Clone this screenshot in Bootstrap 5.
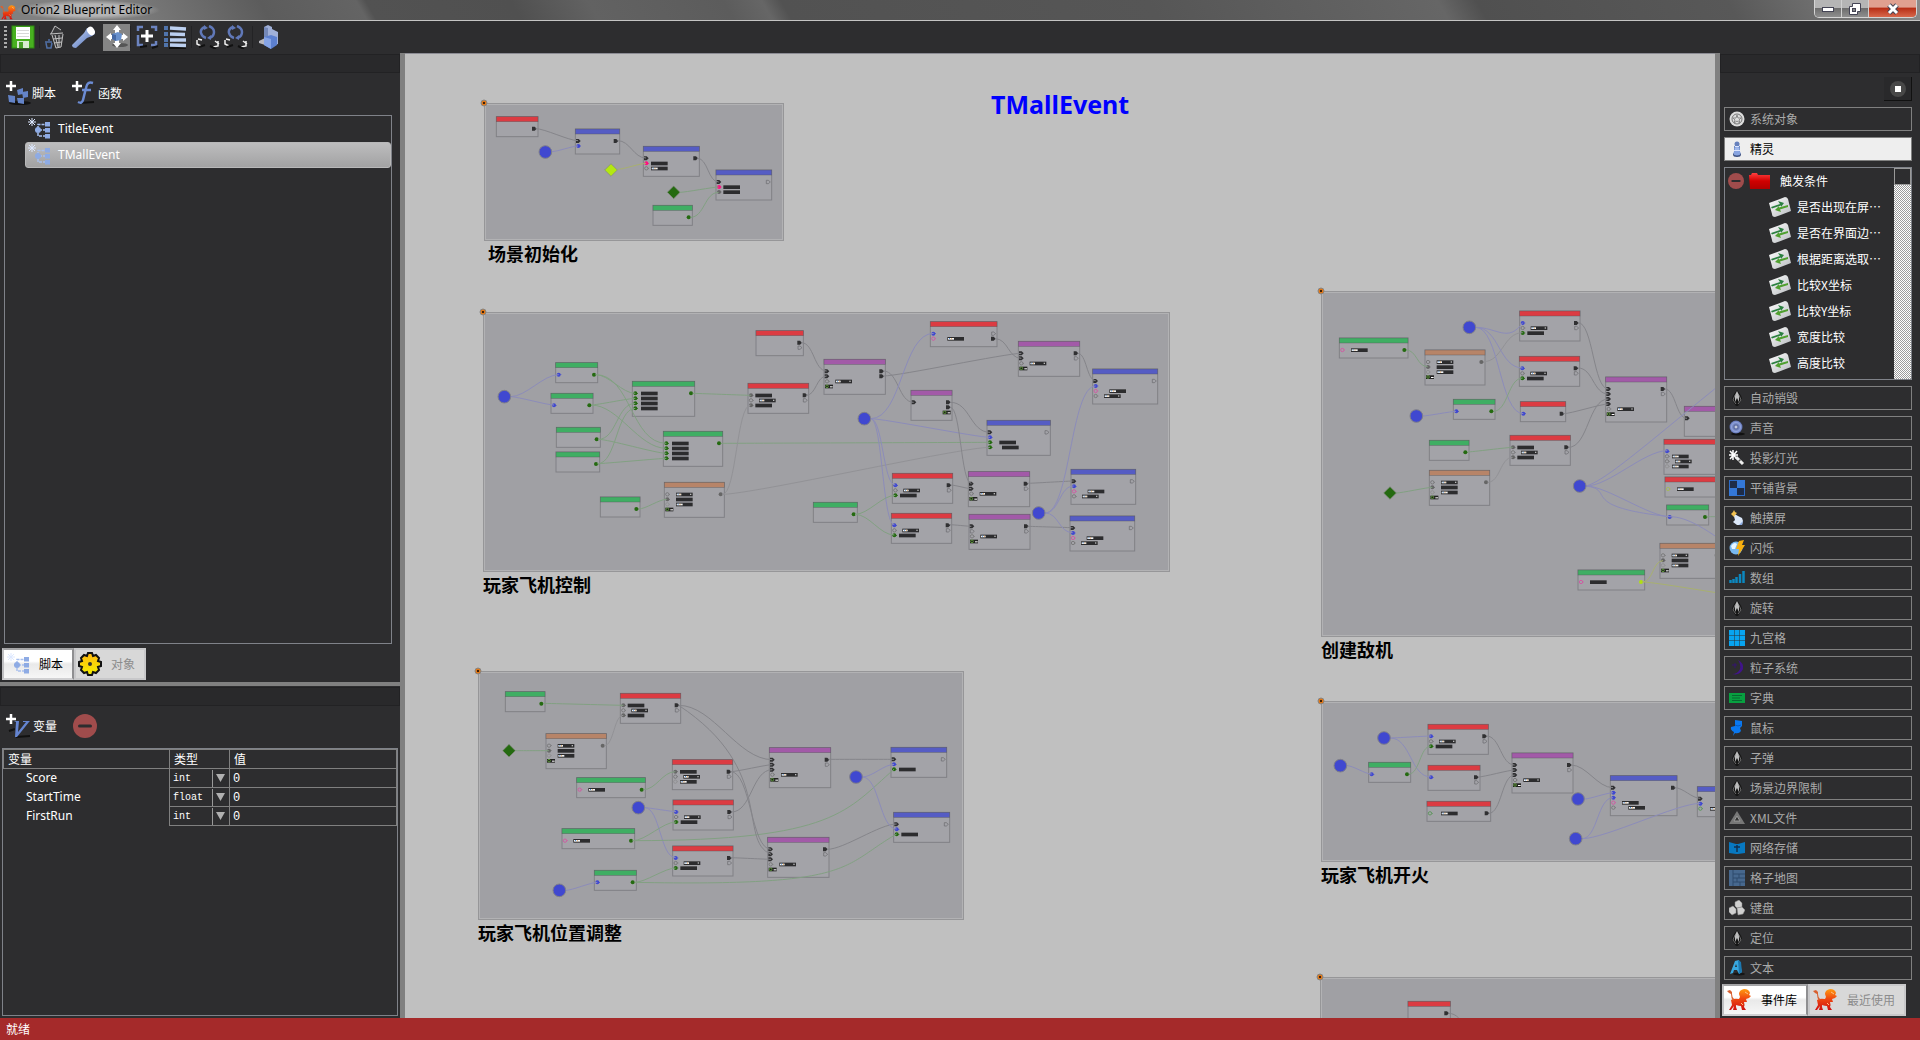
<!DOCTYPE html>
<html lang="zh-CN">
<head>
<meta charset="utf-8">
<meta name="viewport" content="width=device-width, initial-scale=1">
<title>Orion2 Blueprint Editor</title>
<link href="https://cdn.jsdelivr.net/npm/bootstrap@5.3.0/dist/css/bootstrap.min.css" rel="stylesheet">
<style>
  :root { --ui: #2d2d2f; --line: #808080; --edge: #7f8289; }
  body { font: 12px/16px "Noto Sans", "Noto Sans CJK SC", sans-serif; background: var(--ui); color: #fff; }
  button { font: inherit; color: inherit; background: none; border: 0; padding: 0; }
  svg { display: block; flex: none; }
  .cjk { font-family: "Noto Sans CJK SC", sans-serif; }

  .titlebar { height: 21px; border-bottom: 1px solid #c4c4c4; color: #000;
    background: linear-gradient(60deg, #808080 0 6%, #5c5c5c 14%, #646464 19%, #525252 19.5%, #505050 27%, #626262 31%, #5c5c5c 38%, #666 40%, #525252 41%, #565656 60%, #666 75%, #505050 77%, #585858 90%, #8a8a8a); }
  .titletext { padding: 0 8px 0 5px; background: radial-gradient(closest-side, #b4b4b4 60%, transparent); line-height: 20px; }
  .winbtns { height: 18px; border: 1px solid #d5d5d5; border-top: 0; border-radius: 0 0 5px 5px; overflow: hidden; margin-right: 3px; }
  .winbtns button { width: 27px; border-right: 1px solid #d0d0d0; background: linear-gradient(#b5b5b5 0 45%, #6e6e6e 50%, #8e8e8e); display: grid; place-items: center; }
  .winbtns .closer { width: 47px; border: 0; background: linear-gradient(#e0a090 0 40%, #b83018 50%, #d8684c); }

  .tools { height: 32px; padding: 0 0 0 4px; }
  .grip { width: 3px; height: 22px; background: repeating-linear-gradient(#aaa 0 2px, transparent 2px 4px); }
  .tools .on { width: 27px; height: 27px; margin: 0 -4px 0 3px; background: #858585; display: grid; place-items: center; }
  .tsep { width: 1px; height: 22px; background: #232325; }

  .left { width: 400px; }
  .right { width: 200px; }
  .split { width: 5px; background: var(--line); }
  .hsplit { height: 4px; background: var(--line); }
  .dock { height: 19px; margin-top: 1px; border: 1px solid #222224; background: #29292b; }
  .vars { flex: 0 0 332px; }
  .panebar { height: 42px; padding: 0 6px 3px; }
  .scripts { margin: 0 8px 4px 4px; border: 1px solid var(--edge); list-style: none; padding: 0; }
  .scripts a { display: flex; align-items: center; gap: 8px; height: 26px; color: #fff; text-decoration: none; margin-left: 20px; padding-left: 3px; border-radius: 3px; }
  .scripts a.sel { background: linear-gradient(#bdbdbe, #a2a2a3); border: 1px solid #b8b8b9; padding-left: 2px; }

  .tabset { height: 32px; margin-bottom: 2px; padding-left: 2px; }
  .tabset button { height: 32px; border: 2px solid #c8c8ca; background: #d8d8d8; color: #8c8c8c; display: flex; align-items: center; padding: 0 9px 0 2px; gap: 9px; }
  .tabset button.sel { background: linear-gradient(#fff 40%, #e9e9e9 50%, #f6f6f6); color: #000; border-color: #a5a5a7 #8f8f91 #d0d0d2 #c0c0c2; }

  .vbox { margin: 0 2px 2px; border: 1px solid var(--edge); }
  .vtable { width: 100%; table-layout: fixed; border-collapse: collapse; }
  .vtable th, .vtable td { height: 19px; padding: 0; border: 1px solid var(--line); line-height: 16px; font-weight: 400; }
  .vtable thead th { padding-left: 4px; font-family: "Noto Sans CJK SC", sans-serif; }
  .vtable tbody th { border-color: transparent; border-right-color: var(--line); padding-left: 22px; }
  .vtable select, .vtable input { display: block; width: 100%; height: 17px; border: 0; padding: 1px 3px 0; color: #fff; background: transparent; font: 10px/16px "Liberation Mono", monospace; border-radius: 0; }
  .vtable input { font-size: 12px; }
  .vtable select { appearance: none; background: url("data:image/svg+xml,%3Csvg xmlns='http://www.w3.org/2000/svg' width='17' height='17'%3E%3Cpath d='M0.5 0V17' stroke='%23999'/%3E%3Cpath d='M4 4H13L8.5 12Z' fill='%23b0b0b0'/%3E%3C/svg%3E") right center no-repeat; }
  .c-type { width: 60px; }
  .c-val { width: 167px; }

  .statusbar { height: 22px; background: #a52a2a; padding-left: 6px; line-height: 22px; }

  .board { background: #c0c0c0; border-top: 1px solid #8c8c94; min-width: 0; }
  .board h1 { position: absolute; left: 586px; top: 33px; font: 700 25px/34px "Noto Sans", sans-serif; color: #00f; margin: 0; }
  .group { position: absolute; margin: 0; color: #000; }
  .group > svg { overflow: visible; }
  .group figcaption { font: 700 18px/24px "Noto Sans CJK SC", sans-serif; white-space: nowrap; }
  .g1 figcaption { padding-left: 4px; }
  .g1 { left: 79px; top: 49px; }
  .g2 { left: 78px; top: 258px; }
  .g3 { left: 73px; top: 617px; }
  .g4 { left: 916px; top: 237px; }
  .g5 { left: 916px; top: 647px; }
  .g6 { left: 915px; top: 923px; }

  .libs { padding: 0 8px 0 4px; gap: 6px; }
  .lib { height: 24px; border: 1px solid var(--line); color: #aaa; display: flex; align-items: center; gap: 5px; padding-left: 4px; text-align: left; }
  .lib.sel { background: #eee; color: #000; }
  .lib svg { width: 16px; height: 16px; }
  .stopbtn { width: 28px; height: 24px; margin: 4px 8px 6px auto; background: #29292b; border-right: 1px solid #111; border-bottom: 1px solid #111; display: grid; place-items: center; }
  .tree { height: 213px; border: 1px solid var(--edge); overflow: hidden; }
  .tree ul { list-style: none; margin: 0; padding: 0; }
  .tree li > div { height: 26px; display: flex; align-items: center; }
  .branch { gap: 5px; padding-left: 3px; }
  .leaf { gap: 6px; padding-left: 44px; }
  .sbar { width: 17px; background: repeating-conic-gradient(#fff 0 25%, #9c9c9c 0 50%) 0 0 / 2px 2px; }
  .thumb { height: 17px; background: var(--ui); border: 1px solid #999; }
</style>
<script src="https://cdn.jsdelivr.net/npm/bootstrap@5.3.0/dist/js/bootstrap.bundle.min.js"></script>
</head>
<body class="vh-100 d-flex flex-column overflow-hidden m-0">

<svg width="0" height="0" class="position-absolute" aria-hidden="true">
  <defs>
    <linearGradient id="blu" x1="0" y1="0" x2="1" y2="1"><stop offset="0" stop-color="#c4d4f4"/><stop offset="1" stop-color="#5070b8"/></linearGradient>
    <linearGradient id="fire" x1="0" y1="0" x2="0" y2="1"><stop offset="0" stop-color="#ff9a10"/><stop offset=".45" stop-color="#f04a10"/><stop offset="1" stop-color="#d01010"/></linearGradient>
    <linearGradient id="redf" x1="0" y1="0" x2="0" y2="1"><stop offset="0" stop-color="#ff4040"/><stop offset=".5" stop-color="#d00000"/><stop offset="1" stop-color="#b00000"/></linearGradient>
    <linearGradient id="cardg" x1="0" y1="0" x2="1" y2="1"><stop offset="0" stop-color="#fff"/><stop offset="1" stop-color="#b8bcc0"/></linearGradient>
    <linearGradient id="gearg" x1="0" y1="0" x2="0" y2="1"><stop offset="0" stop-color="#ffb810"/><stop offset="1" stop-color="#f4f000"/></linearGradient>
    <radialGradient id="spk"><stop offset="0" stop-color="#fff"/><stop offset=".3" stop-color="#5a6aa0"/><stop offset=".7" stop-color="#8fa2dc"/><stop offset="1" stop-color="#5a6cae"/></radialGradient>
  </defs>
  <symbol id="lion" viewBox="0 0 24 22"><g fill="url(#fire)"><path d="M12 5Q12 1 17 0Q22 0 23 4L22 6L24 7L22 9L19 10L20 13L17 13Q18 16 17 18L19 21H15L14 17Q12 17 9 16L9 18L10 21H6L7 17L4 21H2L5 16L4 11Q7 9 12 10L13 8Z"/></g><path d="M6 12Q4 9 4 5L2 4L0 2L3 1L5 3V5Q5 8 7 10" fill="#d86030"/><path d="M18 3l3 2M14 14l2 2" stroke="#ffc080" stroke-width="1"/></symbol>
  <symbol id="tree" viewBox="0 0 22 22"><path d="M10 11V6.500H17M10 11V18H17M7 12H17" fill="none" stroke="#a8c0ee" stroke-width="1.500" stroke-dasharray="3 1"/><g fill="#8eabe4"><circle cx="10" cy="12" r="3"/><rect x="17" y="4" width="5" height="4.500"/><rect x="17" y="10" width="5" height="4.500"/><rect x="17" y="16" width="5" height="4.500"/></g><path d="M4 0V8M0 4H8M1 1L7 7M7 1L1 7" stroke="#dde8ff" stroke-width="1"/></symbol>
  <symbol id="focus" viewBox="0 0 24 24"><path d="M9 2Q4 4 5 8Q6 12 10 13M13 1Q18 3 18 7Q18 11 14 13" fill="none" stroke="#6078b8" stroke-width="2.500"/><path d="M8 0L12 3L8 5ZM15 10L11 13L15 15Z" fill="#6078b8"/><path d="M1 15V19L5 21M6 15L2 14M19 16L23 19M22 16V21L17 22" fill="none" stroke="#f0f0f0" stroke-width="1.500"/><path d="M3 22L9 20M14 21L20 24" stroke="#111" stroke-width="2"/></symbol>
  <symbol id="minus" viewBox="0 0 24 24"><circle cx="12" cy="12" r="12" fill="#a04c4c"/><rect x="5" y="10.500" width="14" height="3" rx="1.500" fill="#2d2d2f"/></symbol>
  <symbol id="swap" viewBox="0 0 22 20"><path d="M0 6L16 0Q18 0 19 2L22 14L6 20Q3 20 3 17Z" fill="url(#cardg)"/><path d="M2 10L11 7L9 4L15 6L12 10V8.500L3 11.500Z" fill="#2a8040"/><path d="M19 8L10 10.500V9L6 13L12 15L11 12.500L19 10Z" fill="#50a030"/></symbol>
  <symbol id="i-wheel" viewBox="0 0 16 16"><circle cx="8" cy="8" r="7.500" fill="#ddd"/><circle cx="8" cy="8" r="5" fill="none" stroke="#777"/><path d="M8 4L9 7L12 7L10 9L11 12L8 10L5 12L6 9L4 7H7Z" fill="none" stroke="#888"/></symbol>
  <symbol id="i-pawn" viewBox="0 0 16 16"><rect x="5" y="5" width="6" height="9" fill="#6f8cc8"/><ellipse cx="8" cy="13.500" rx="4" ry="2.500" fill="#3c5080"/><ellipse cx="8" cy="12" rx="3.500" ry="2.500" fill="#88a4e0"/><ellipse cx="8" cy="8" rx="2.500" ry="2" fill="#a0b8ec"/><circle cx="8" cy="3" r="2.500" fill="#6680bc"/><path d="M6 5.500H10M5 9.500H11" stroke="#dde6ff"/></symbol>
  <symbol id="i-drop" viewBox="0 0 16 16"><path d="M8 0Q13 6 13 9L9 16H7L3 10Q3 6 8 0Z" fill="#151515"/><path d="M8 1L10 5V12L8 8L6 12V5Z" fill="#bbb"/><path d="M6 5L4 10L7 14M10 5L12 10L9 14" stroke="#707070" fill="none"/></symbol>
  <symbol id="i-sound" viewBox="0 0 16 16"><ellipse cx="9" cy="14" rx="7" ry="1.500" fill="#111"/><circle cx="7" cy="7" r="6.500" fill="url(#spk)"/></symbol>
  <symbol id="i-wand" viewBox="0 0 16 16"><path d="M4 0V10M0 5H9M1 1L8 9M8 1L1 9" stroke="#fff" stroke-width="1.500"/><path d="M7 7L14 14" stroke="#eee" stroke-width="3"/><path d="M10 10L11 11" stroke="#555" stroke-width="3"/></symbol>
  <symbol id="i-tile" viewBox="0 0 16 16"><rect x=".5" y=".5" width="15" height="15" fill="#1e2c48" stroke="#2c6cc8"/><path d="M8 0H16V8H8ZM0 8H8V16H0Z" fill="#3478d8"/></symbol>
  <symbol id="i-touch" viewBox="0 0 16 16"><path d="M4 3L9 6L13 8L14 11L13 15L8 15L4 12L6 10Z" fill="#dce8fa"/><path d="M10 15L14 11L13 15Z" fill="#88a8e0"/><path d="M5 0L6 2L8 3L6 5L5 7L3 5L2 4L4 2Z" fill="#f0c050"/></symbol>
  <symbol id="i-flash" viewBox="0 0 16 16"><circle cx="7" cy="8" r="6.500" fill="#78b8f0"/><path d="M2 6Q5 1 8 4L6 9L3 9Z" fill="#e8f6ff"/><path d="M10 1L15 0L13 5H16L9 16L10 9H7Z" fill="#f8b010"/></symbol>
  <symbol id="i-bars" viewBox="0 0 16 16"><path d="M1.500 10V13M4.500 9V13M7.500 7V13M11 4V13M14.500 1V13" stroke="#0c88c0" stroke-width="2.500"/></symbol>
  <symbol id="i-nine" viewBox="0 0 16 16"><path d="M0 0H5V5H0ZM5.500 0H10.500V5H5.500ZM11 0H16V5H11ZM0 5.500H5V10.500H0ZM5.500 5.500H10.500V10.500H5.500ZM11 5.500H16V10.500H11ZM0 11H5V16H0ZM5.500 11H10.500V16H5.500ZM11 11H16V16H11Z" fill="#08a4f0"/></symbol>
  <symbol id="i-moon" viewBox="0 0 16 16"><path d="M9 0Q15 3 14 9Q11 16 3 14Q9 14 11 9Q12 4 9 0Z" fill="#40148a"/><path d="M6 3V8M3 5H8" stroke="#341470"/></symbol>
  <symbol id="i-dict" viewBox="0 0 16 16"><rect y="3" width="16" height="10" fill="#08a040"/><path d="M3 5.500H13M3 8H11M3 10.500H13" stroke="#066830"/></symbol>
  <symbol id="i-pin" viewBox="0 0 16 16"><path d="M6 0L13 1V6L11 8L12 11Q10 14 6 13L4 16L5 12Q1 10 2 7L6 6Z" fill="#0a78f0"/><path d="M6 5Q9 7 12 5" stroke="#085ac0" fill="none"/></symbol>
  <symbol id="i-tri" viewBox="0 0 16 16"><path d="M8 1L16 14H0Z" fill="#777"/><path d="M8 6L11 11H5Z" fill="#333" stroke="#999"/></symbol>
  <symbol id="i-net" viewBox="0 0 16 16"><path d="M0 2L7 4V14L0 13ZM16 2L9 4V14L16 13Z" fill="#0878c0"/><path d="M7 4H9V14H7Z" fill="#0878c0"/><path d="M8 5V12M5 7H11" stroke="#103050" stroke-width="1.500"/></symbol>
  <symbol id="i-grid" viewBox="0 0 16 16"><rect width="16" height="16" fill="#47688e"/><path d="M4 0V16M4 4H16M4 8H16M4 12H16M10 4V8M8 8V12M11 12V16" stroke="#2f4a6c" fill="none"/></symbol>
  <symbol id="i-keys" viewBox="0 0 16 16"><g fill="#d0d0d0" stroke="#888" stroke-width=".5"><path d="M6 2L10 0L13 3V7L8 8L6 6Z"/><path d="M0 8L4 6L7 9V13L3 15L0 12Z"/><path d="M8 8L13 7L16 10L14 14L9 15Z"/></g></symbol>
  <symbol id="i-text" viewBox="0 0 16 16"><ellipse cx="10" cy="14" rx="6" ry="1.500" fill="#151515"/><path d="M1 14L6 1L10 0L13 12L10 14L8 10H5L4 13ZM6 7H8L7 4Z" fill="#38a8e0" fill-rule="evenodd"/><path d="M9 0L12 2L13 12L10 14Z" fill="#1c78b0"/></symbol>
</svg>

<header class="titlebar d-flex align-items-start">
  <svg width="16" height="17" class="mt-1"><use href="#lion"/></svg>
  <span class="titletext">Orion2 Blueprint Editor</span>
  <div class="winbtns d-flex ms-auto">
    <button type="button" aria-label="最小化"><svg width="12" height="6"><rect x=".5" y="1.500" width="11" height="4" fill="#fff" stroke="#445"/></svg></button>
    <button type="button" aria-label="还原"><svg width="12" height="12"><path d="M3.500.5H11.500V8.500H8.500V11.500H.5V3.500H3.500Z" fill="#fff" stroke="#445"/><rect x="3.500" y="5.500" width="3" height="3" fill="#888" stroke="#445"/></svg></button>
    <button type="button" class="closer" aria-label="关闭"><svg width="12" height="12"><path d="M2 2L10 10M10 2L2 10" stroke="#445" stroke-width="5"/><path d="M2 2L10 10M10 2L2 10" stroke="#fff" stroke-width="3"/></svg></button>
  </div>
</header>

<nav class="tools d-flex align-items-center gap-1" aria-label="工具栏">
  <span class="grip"></span>
  <button type="button" aria-label="保存"><svg width="24" height="24"><rect x="1" y="1" width="22" height="22" fill="#48b020" stroke="#2c8810"/><rect x="5" y="2" width="14" height="12" fill="#fff"/><path d="M6 5.500H18M6 8.500H18M6 11.500H18" stroke="#d8d8d8"/><rect x="6" y="16" width="12" height="7" fill="#d8ecd0"/><rect x="8" y="17" width="4" height="6" fill="#48a028"/></svg></button>
  <span class="tsep"></span>
  <button type="button" aria-label="删除"><svg width="24" height="24"><path d="M6 9L10 1L17 5L19 8L18 22L11 24L8 11Z" fill="#3a3a3c"/><path d="M7 9L11 1L17 5M6 9L19 8M8 10L12 23L17 22L19 9M11 10L14 22M15 10L15 22M9 14L18 13M10 18L18 17" fill="none" stroke="#c0c0c0"/><path d="M1 17H8M2 18L3 23H7L8 18M4 15H6" fill="none" stroke="#5070a8" stroke-width="1.500"/></svg></button>
  <button type="button" aria-label="查找"><svg width="24" height="24"><path d="M0 20L12 8L15 3L20 3L23 9L20 11L15 13L4 23Q0 23 0 20Z" fill="url(#blu)"/><ellipse cx="19" cy="6" rx="3.500" ry="4.500" fill="#fff" transform="rotate(-35 19 6)"/></svg></button>
  <button type="button" class="on" aria-label="移动" aria-pressed="true"><svg width="24" height="24"><ellipse cx="15" cy="20" rx="8" ry="2" fill="#555"/><path d="M12 0L16 5H14V8H10V5H8ZM12 23L8 18H10V15H14V18H16ZM1 12L6 8V10H9V14H6V16ZM23 12L18 8V10H15V14H18V16Z" fill="#fff"/><path d="M7 9L13 7L17 9L16 15L11 16L7 14Z" fill="#6890cc"/><path d="M7 9L11 10V16L7 14Z" fill="#4468a4"/></svg></button>
  <span class="tsep"></span>
  <button type="button" aria-label="添加框"><svg width="24" height="24"><path d="M3 6V2H8M16 2H21V6M21 16V20H16M8 20H3V10" fill="none" stroke="#6c84c0" stroke-width="2.500"/><path d="M5 22L12 21M17 23L23 21" stroke="#111" stroke-width="2"/><path d="M12 5V17M6 11H18" stroke="#fff" stroke-width="3"/></svg></button>
  <button type="button" aria-label="列表"><svg width="24" height="24"><path d="M6 23H23" stroke="#111" stroke-width="2"/><path d="M1 3H5M1 9H5M1 15H5M1 20H5" stroke="#5074ac" stroke-width="4"/><path d="M7 3L23 4M7 9L22 9.500M7 15L23 15M7 20L23 20.500" stroke="#bcd0f0" stroke-width="3.500"/></svg></button>
  <span class="tsep"></span>
  <button type="button" aria-label="定位上一个"><svg width="24" height="24"><use href="#focus"/></svg></button>
  <button type="button" aria-label="定位下一个"><svg width="24" height="24"><use href="#focus"/></svg></button>
  <span class="tsep"></span>
  <button type="button" aria-label="构建"><svg width="24" height="24"><path d="M7 2L11 0L15 2V4L21 7V19L15 21L7 15Z" fill="#a0b0d8"/><path d="M7 2L11 3V16L7 14Z" fill="#7488b8"/><path d="M2 16L8 13V20L2 18Z" fill="#b8b8c0"/><path d="M7 12L14 10L20 12V20L14 24L7 20Z" fill="#5c80d0"/><path d="M7 12L14 14V24L7 20Z" fill="#86a4e6"/></svg></button>
</nav>

<main class="d-flex flex-grow-1 overflow-hidden">
  <aside class="left d-flex flex-column flex-shrink-0">
    <section class="d-flex flex-column flex-grow-1">
      <div class="dock"></div>
      <div class="panebar d-flex align-items-center gap-3 cjk">
        <button type="button" class="d-flex align-items-center"><svg width="26" height="24"><ellipse cx="14" cy="22" rx="11" ry="2" fill="#111"/><path d="M5 0V10M0 5H10" stroke="#fff" stroke-width="2.500"/><path d="M11 9L17 7V13L12 14ZM2 14L9 15V22L3 21ZM16 11L22 10V16L17 17ZM11 17L18 17V23L12 22Z" fill="#6484c8"/></svg><span>脚本</span></button>
        <button type="button" class="d-flex align-items-center"><svg width="26" height="24"><path d="M7 22L22 21" stroke="#111" stroke-width="2"/><path d="M5 0V10M0 5H10" stroke="#fff" stroke-width="2.500"/><path d="M21 2Q15 0 14 7L11 19Q10 23 6 21M10 9H19" fill="none" stroke="#6c8cd4" stroke-width="2.500"/></svg><span>函数</span></button>
      </div>
      <ul class="scripts flex-grow-1">
        <li><a href="#"><svg width="22" height="22"><use href="#tree"/></svg><span>TitleEvent</span></a></li>
        <li><a href="#" class="sel" aria-current="true"><svg width="22" height="22"><use href="#tree"/></svg><span>TMallEvent</span></a></li>
      </ul>
      <div class="tabset d-flex cjk" role="tablist">
        <button type="button" class="sel" role="tab" aria-selected="true"><svg width="24" height="22"><use href="#tree"/></svg><span>脚本</span></button>
        <button type="button" role="tab" aria-selected="false"><svg width="24" height="24"><path d="M10 1H14L15 4L18 3L21 6L20 9L23 10V14L20 15L21 18L18 21L15 20L14 23H10L9 20L6 21L3 18L4 15L1 14V10L4 9L3 6L6 3L9 4Z" fill="url(#gearg)" stroke="#111" stroke-width="2"/><circle cx="12" cy="12" r="2" fill="#333"/></svg><span>对象</span></button>
      </div>
      <div class="hsplit"></div>
    </section>
    <section class="vars d-flex flex-column">
      <div class="dock"></div>
      <div class="panebar d-flex align-items-center gap-3 cjk">
        <button type="button" class="d-flex align-items-center"><svg width="27" height="24"><path d="M3 17L9 15M10 23L24 22" stroke="#111" stroke-width="2"/><path d="M5 0V10M0 5H10" stroke="#fff" stroke-width="2.500"/><path d="M8 7H13L12 18L20 8H17V7H24L23 8L11 23H9L10 8Z" fill="#6484d0"/></svg><span>变量</span></button>
        <button type="button" aria-label="删除变量"><svg width="24" height="24"><use href="#minus"/></svg></button>
      </div>
      <div class="vbox flex-grow-1">
        <table class="vtable">
          <colgroup><col><col class="c-type"><col class="c-val"></colgroup>
          <thead><tr><th>变量</th><th>类型</th><th>值</th></tr></thead>
          <tbody id="varRows"></tbody>
        </table>
      </div>
    </section>
  </aside>
  <div class="split"></div>

  <section class="board flex-grow-1 position-relative overflow-hidden" id="board">
    <h1>TMallEvent</h1>
  </section>

  <div class="split"></div>
  <aside class="right d-flex flex-column flex-shrink-0">
    <div class="dock"></div>
    <button type="button" class="stopbtn" aria-label="停止"><svg width="16" height="16"><circle cx="8" cy="8" r="8" fill="#484848"/><rect x="5" y="5" width="6" height="6" fill="#fff"/></svg></button>
    <div class="libs d-flex flex-column flex-grow-1 cjk" id="libs">
      <button type="button" class="lib"><svg><use href="#i-wheel"/></svg>系统对象</button>
      <button type="button" class="lib sel" aria-expanded="true"><svg><use href="#i-pawn"/></svg>精灵</button>
      <div class="tree d-flex">
        <ul class="flex-grow-1">
          <li><div class="branch"><svg width="16" height="16"><use href="#minus"/></svg><svg width="22" height="17"><path d="M0 2H2L3 0H8L9 2H21V16H1Z" fill="url(#redf)"/></svg><span class="ps-1">触发条件</span></div>
            <ul id="leaves"></ul>
          </li>
        </ul>
        <div class="sbar"><div class="thumb"></div></div>
      </div>
    </div>
    <div class="tabset d-flex cjk" role="tablist">
      <button type="button" class="sel" role="tab" aria-selected="true"><svg width="26" height="22"><use href="#lion"/></svg><span>事件库</span></button>
      <button type="button" role="tab" aria-selected="false"><svg width="26" height="22"><use href="#lion"/></svg><span>最近使用</span></button>
    </div>
  </aside>
</main>
<footer class="statusbar cjk">就绪</footer>

<script>
document.getElementById('varRows').innerHTML = [['Score','int'],['StartTime','float'],['FirstRun','int']].map(([n,t]) =>
  `<tr><th scope="row">${n}</th><td><select aria-label="${n} 类型"><option>${t}</option></select></td><td><input type="text" value="0" aria-label="${n} 值"></td></tr>`).join('');
document.getElementById('leaves').innerHTML = ['是否出现在屏⋯','是否在界面边⋯','根据距离选取⋯','比较X坐标','比较Y坐标','宽度比较','高度比较'].map(t =>
  `<li><div class="leaf"><svg width="22" height="20"><use href="#swap"/></svg><span>${t}</span></div></li>`).join('');
document.getElementById('libs').insertAdjacentHTML('beforeend', [
  ['drop','自动销毁'],['sound','声音'],['wand','投影灯光'],['tile','平铺背景'],['touch','触摸屏'],['flash','闪烁'],['bars','数组'],['drop','旋转'],
  ['nine','九宫格'],['moon','粒子系统'],['dict','字典'],['pin','鼠标'],['drop','子弹'],['drop','场景边界限制'],['tri','XML文件'],['net','网络存储'],
  ['grid','格子地图'],['keys','键盘'],['drop','定位'],['text','文本']].map(([i,t]) =>
  `<button type="button" class="lib"><svg><use href="#i-${i}"/></svg>${t}</button>`).join(''));

/* Blueprint graph. One canvas pixel is 3 graph units.
   node: colour, x, y, width, rows, left ports, right ports, fields [row, dx, kind]
   field kinds: 0 plain, 1 with text, 2 with text and drop-down.
   wire: colour, start x y, end x y, and for hand-bent wires the two control points. */
const HEAD = { R:'#dc3b42', B:'#555cc4', G:'#3fae63', P:'#a25aa8', O:'#b78468' };
const PORT = { b:'#4048d0', g:'#246a10', m:'#ff1080', r:'#666', y:'#b0e010', M:'#e040a0', h:'#686868', w:'#8a8a8a', Y:'#a8c040', G:'#40903c' };
const WIRE = { k:'#85858a', b:'#8c8cba', g:'#82a082', y:'#a8b070', r:'#929296' };
const rhr = [[0,22,0],[1,33,2],[2,22,0]], bhg = [[1,33,2],[2,23,0]], four = [[0,26,0],[1,26,0],[2,26,0],[3,26,0]], ora = [[0,35,2],[1,35,0],[2,35,1]];
const groups = [
 { cls:'g1', w:300, h:138, ox:42, oy:39, cap:'场景初始化',
   nodes:[['R',79,80,125,1,'','p'],['B',316,117,133,2,'pb','p'],['B',520,169,168,3,'pmh','p',[[1,23,0],[2,23,1]]],['B',738,240,167,3,'pmr','o',[[1,22,0],[2,22,0]]],['G',549,346,118,1,'','g']],
   marks:[['c',226,186],['y',423,240],['d',611,307]],
   wires:['k 197 116 324 152','b 245 185 324 168','k 443 152 528 204','y 443 238 528 220','k 682 205 746 276','g 630 307 746 291','g 661 382 746 307'] },
 { cls:'g2', w:687, h:260, ox:39, oy:36, cap:'玩家飞机控制',
   nodes:[['G',257,188,126,1,'b','g'],['G',243,280,126,1,'b','g'],['G',259,382,132,1,'','g'],['G',258,456,131,1,'','g'],['G',487,244,187,4,'gggg','g',four],['G',580,394,178,4,'gggg','g',four],
     ['O',583,547,180,4,'hrw*','r',ora],['G',391,591,119,1,'','g'],['R',858,92,142,2,'','po'],['R',834,250,182,3,'rhr','po',rhr],['P',1062,178,184,4,'pph*','pp',[[2,34,2]]],['G',1030,607,132,1,'','g'],
     ['R',1381,65,200,2,'bM','op',[[1,51,1]]],['P',1645,124,184,4,'pph*','po',[[2,34,2]]],['B',1868,207,195,4,'pbMh','o',[[2,50,1],[3,34,2]]],['P',1323,271,123,3,'p','pp*'],['B',1551,361,190,4,'pbgg','o',[[2,37,0],[3,45,0]]],
     ['R',1267,520,181,3,'bhg','po',bhg],['R',1264,640,181,3,'bhg','po',bhg],['P',1495,515,184,4,'pph*','po',[[2,34,2]]],['P',1497,643,183,4,'poh*','po',[[2,34,2]]],['B',1803,508,194,4,'pbMh','o',[[2,50,1],[3,33,2]]],['B',1800,648,194,4,'pbMh','o',[[2,50,1],[3,33,2]]]],
   marks:[['c',103,290],['c',1183,356],['c',1706,639]],
   wires:['b 122 290 266 224','b 122 290 252 315','g 377 224 496 280','g 377 224 589 430','g 363 315 496 295','g 363 315 589 445','g 385 418 496 310','g 385 418 589 460','g 383 491 496 325','g 383 491 589 475','g 668 280 842 286','g 752 430 1560 427','g 505 627 590 598','r 757 583 842 315','r 757 583 1560 442','k 994 128 1070 213','k 1008 286 1070 228','k 1240 213 1331 307','k 1240 228 1654 160','k 1575 116 1654 175','k 1823 160 1877 242','b 1202 356 1391 100','b 1202 356 1560 412','b 1202 356 1276 555','b 1202 356 1273 674','k 1441 307 1560 397','k 1441 322 1504 550','k 1442 555 1504 566','k 1440 674 1504 679','k 1673 550 1811 543','k 1673 679 1808 683','b 1725 639 1877 258','b 1725 639 1811 558','b 1725 639 1808 698','g 1155 643 1276 586','g 1155 643 1273 705'] },
 { cls:'g3', w:486, h:249, ox:24, oy:33, cap:'玩家飞机位置调整',
   nodes:[['G',106,95,119,1,'','g'],['R',451,100,181,3,'rhr','po',rhr],['O',228,221,181,4,'hrw*','r',ora],['G',320,353,206,1,'M','g',[[0,35,1]]],['R',607,299,181,3,'rhw','po',[[0,23,0],[1,33,2],[2,23,1]]],['R',609,420,181,3,'bhg','po',bhg],['R',608,558,181,3,'bhg','po',bhg],
     ['G',276,506,218,1,'M','g',[[0,34,1]]],['G',373,631,126,1,'b','g'],['P',898,263,184,5,'ppph*','po',[[3,35,2]]],['P',893,532,184,5,'ppph*','po',[[3,35,2]]],['B',1263,262,167,3,'pbg','o',[[2,24,0]]],['B',1271,457,168,3,'pbg','o',[[2,23,0]]]],
   marks:[['d',117,272],['c',505,443],['c',268,691],['c',1158,351]],
   wires:['g 219 130 460 136','r 403 257 460 166','g 136 272 237 272','g 520 389 616 335','b 524 443 618 455','b 524 443 617 593','g 488 542 618 486','g 488 542 1272 328 1100 542 1130 450','g 494 667 617 624','g 494 667 1280 522 1160 680 1110 620','b 287 691 382 667','k 626 136 907 299','k 626 136 903 583 920 330 800 540','k 782 335 907 314','k 782 335 903 568','k 784 456 907 329','k 782 593 903 598','k 1076 298 1272 298','k 1071 568 1280 492','b 1177 351 1272 313','b 1177 351 1280 507'] },
 { cls:'g4', w:520, h:346, ox:33, oy:33, cap:'创建敌机',
   nodes:[['G',88,174,206,1,'M','g',[[0,35,1]]],['O',345,210,180,4,'hrw*','r',ora],['R',629,93,181,3,'bhg','po',bhg],['R',628,229,181,3,'bhg','po',bhg],['G',430,358,125,1,'b','g'],['R',631,365,136,1,'b','p'],['G',358,481,119,1,'','g'],['R',600,466,181,3,'rhr','po',rhr],['O',358,571,181,4,'hrw*','r',ora],
     ['P',887,291,183,6,'pppph*','po',[[4,35,2]]],['P',1123,379,184,3,'p','p'],['R',1062,478,181,4,'bhhw','po',[[1,24,1],[2,33,2],[3,24,1]]],['R',1065,591,180,1,'Y','p',[[0,36,1]]],['G',1070,675,126,1,'b','g'],['O',1050,790,181,4,'hrw*','r',ora],['G',804,870,200,1,'M','y',[[0,36,0]]]],
   marks:[['c',478,142],['c',319,408],['c',809,618],['d',240,639]],
   wires:['g 288 210 353 260','r 520 245 638 158','b 497 142 638 128 560 142 595 190','b 497 142 638 264','b 497 142 640 401','b 338 408 438 394','g 550 394 638 294','k 804 128 895 327','k 804 264 895 342','k 760 401 895 372','k 775 502 895 357','g 471 516 608 502','r 533 607 608 532','g 259 639 367 622','k 1064 327 1131 415','b 828 618 1072 512','b 828 618 1079 710','b 828 618 1079 710 920 630 800 680','b 828 618 1400 180 900 600 1100 410','b 1079 710 1300 830 1130 710 1190 745','g 1190 710 1300 710','y 998 906 1059 842','y 998 906 1500 980'] },
 { cls:'g5', w:520, h:161, ox:33, oy:33, cap:'玩家飞机开火',
   nodes:[['R',354,103,181,3,'bhg','po',bhg],['G',176,217,126,1,'b','g'],['R',354,226,156,2,'b','po'],['R',351,334,191,1,'G','p',[[0,42,1]]],['P',606,189,183,5,'ppph*','po',[[3,34,2]]],['B',901,257,200,5,'pbbMh','p',[[3,35,1],[4,54,1]]],['B',1162,290,168,3,'pbG','o',[[2,38,1]]]],
   marks:[['c',222,144],['c',91,227],['c',804,327],['c',797,446]],
   wires:['b 241 144 363 138','b 241 144 363 261','b 110 227 185 252','g 296 252 363 168','k 529 138 614 225','k 504 261 614 240','k 536 370 614 255','k 783 225 909 293','b 823 327 909 308','b 816 446 909 323','b 816 446 1171 340','k 1094 293 1171 325'] },
 { cls:'g6', w:520, h:161, ox:30, oy:861, cap:'',
   nodes:[['R',294,934,127,1,'','p']], marks:[], wires:['k 415 970 520 1060'] }
];
const rect = (x,y,w,h,f) => `<rect x="${x}" y="${y}" width="${w}" height="${h}" fill="${f}"/>`;
function port(c, x, y) {
  if (c === '*') return rect(x-6,y-5,24,11,'#222') + `<circle cx="${x}" cy="${y}" r="4" fill="none" stroke="#70c040" stroke-width="2"/>` + rect(x+9,y,8,3,'#fff');
  if (c === 'p') return `<path d="M${x-7} ${y-6}H${x+1}L${x+7} ${y}L${x+1} ${y+6}H${x-7}Z" fill="#303032"/>`;
  if (c === 'o') return `<path d="M${x-5} ${y-5}H${x+1}L${x+7} ${y}L${x+1} ${y+5}H${x-5}Z" fill="none" stroke="#68686c" stroke-width="2"/>`;
  if ('MhwYG'.includes(c)) return `<circle cx="${x}" cy="${y}" r="5" fill="none" stroke="${PORT[c]}" stroke-width="2"/>` + rect(x+6,y-1,2,2,PORT[c]);
  return `<circle cx="${x}" cy="${y}" r="6" fill="${PORT[c]}"/>` + rect(x+5,y-1,3,2,PORT[c]);
}
function node([c,x,y,w,n,l,r,fields=[]]) {
  let s = `<rect x="${x}" y="${y}" width="${w}" height="${45+15*n}" fill="#a3a3a8" stroke="#808085" stroke-width="3"/>` +
    `<rect x="${x}" y="${y}" width="${w}" height="15" fill="${HEAD[c]}" stroke="#55555a" stroke-opacity=".6" stroke-width="2"/>`;
  [...l].forEach((p,i) => s += port(p, x+9, y+36+15*i));
  [...r].forEach((p,i) => s += port(p, p === '*' ? x+w-22 : x+w-11, y+36+15*i));
  fields.forEach(([row,dx,k]) => {
    const fx = x+dx, fy = y+31+15*row;
    s += rect(fx,fy,50,11,'#2c2c2e');
    if (k) s += rect(fx+2,fy+3,k === 2 ? 14 : 18,5,'#f4f4f4') + rect(fx+5,fy+3,3,3,'#5090d8') + rect(fx+11,fy+3,2,4,'#e8a050');
    if (k === 2) s += rect(fx+42,fy+3,4,4,'#bbb');
  });
  return s;
}
function wire(t) {
  const [c, ...p] = t.split(' '), [x1,y1,x2,y2] = p.map(Number);
  const reach = Math.min((x2-x1)/2, Math.abs(y2-y1)*.6 + 6);
  const bend = p.length > 4 ? p.slice(4).join(' ') : `${x1+reach} ${y1} ${x2-reach} ${y2}`;
  return `<path d="M${x1} ${y1}C${bend} ${x2} ${y2}" fill="none" stroke="${WIRE[c]}" stroke-width="3"/>`;
}
function mark([k,x,y]) {
  return k === 'c' ? `<circle cx="${x}" cy="${y}" r="19" fill="#4048d0" stroke="#808088" stroke-width="3"/>`
    : `<path d="M${x} ${y-19}L${x+19} ${y}L${x} ${y+19}L${x-19} ${y}Z" fill="${k === 'y' ? '#b4e810' : '#246a10'}" stroke="#80887c" stroke-width="2"/>`;
}
const board = document.getElementById('board');
groups.forEach(g => {
  const W = g.w*3, H = g.h*3;
  const f = document.createElement('figure');
  f.className = 'group ' + g.cls;
  f.innerHTML = `<svg width="${g.w}" height="${g.h}" viewBox="${g.ox} ${g.oy} ${W} ${H}">` +
    rect(g.ox,g.oy,W,H,'#969698') + rect(g.ox+3,g.oy+3,W-6,H-6,'#b2b2b4') + rect(g.ox+6,g.oy+6,W-12,H-12,'#a0a0a4') +
    g.nodes.map(node).join('') + g.wires.map(wire).join('') + g.marks.map(mark).join('') +
    `<circle cx="${g.ox}" cy="${g.oy}" r="9" fill="#e07818" stroke="#858585" stroke-width="3"/>` + rect(g.ox-3,g.oy-3,6,6,'#402008') +
    `</svg><figcaption>${g.cap}</figcaption>`;
  board.append(f);
});
</script>
</body>
</html>
